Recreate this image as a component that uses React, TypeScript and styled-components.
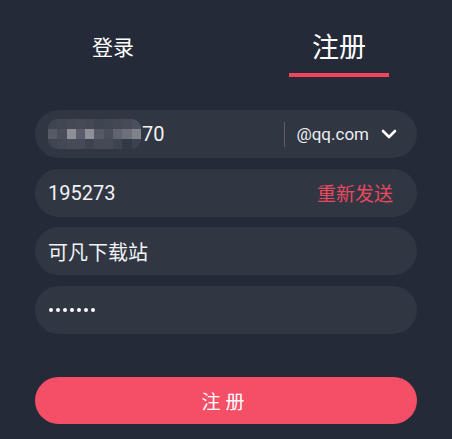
import React from 'react';
import styled, {createGlobalStyle} from "styled-components";

const GlobalStyle = createGlobalStyle`
  html, body {
    margin: 0;
    padding: 0;
    background-color: #252a38;
  }
  body {
    font-family: Roboto, "Noto Sans CJK SC", sans-serif;
    color: #f2f3f5;
  }
`
const Page = styled.div`
  width: 452px;
  height: 439px;
  background-color: #252a38;
  overflow: hidden;
`
const Tabs = styled.nav`
  display: flex;
  padding-top: 28px;
`
const Tab = styled.div<{ $active?: boolean }>`
  flex: 1;
  display: flex;
  flex-direction: column;
  align-items: center;
  cursor: pointer;

  span {
    height: 36px;
    line-height: 36px;
    font-family: "Noto Sans CJK SC", sans-serif;
    font-size: ${p => p.$active ? '27px' : '21px'};
    color: #ffffff;
  }

  &::after {
    content: '';
    width: 100px;
    height: 4px;
    margin-top: 9px;
    background-color: ${p => p.$active ? '#f0455d' : 'transparent'};
  }
`
const Form = styled.form`
  display: flex;
  flex-direction: column;
  gap: 10.5px;
  padding: 33px 35px 0;
`
const Field = styled.div<{ $right?: number }>`
  height: 48px;
  border-radius: 24px;
  background-color: #313643;
  display: flex;
  align-items: center;
  padding: 0 ${p => p.$right ?? 20}px 0 13px;
  font-size: 20px;
  color: #f2f3f5;
`
const Value = styled.span`
  font-family: Roboto, "Noto Sans CJK SC", sans-serif;
  font-size: 20px;
`
const Mosaic = styled.span`
  display: grid;
  grid-template-columns: repeat(10, 9.3px);
  grid-template-rows: repeat(3, 9.7px);
  border-radius: 9px;
  overflow: hidden;
  filter: blur(0.4px);
  margin-right: 1px;
`
const Spacer = styled.span`
  flex: 1;
`
const Divider = styled.span`
  width: 1px;
  height: 25px;
  background-color: #5b606c;
`
const Domain = styled.span`
  margin-left: 11px;
  font-size: 17px;
  color: #eceef1;
`
const Chevron = styled.svg`
  margin-left: 12px;
  width: 16px;
  height: 10px;
`
const Resend = styled.span`
  font-family: "Noto Sans CJK SC", sans-serif;
  font-size: 19px;
  color: #e9485e;
  cursor: pointer;
`
const Dots = styled.span`
  display: flex;
  gap: 3px;
  margin-left: 1px;

  i {
    width: 4px;
    height: 4px;
    border-radius: 50%;
    background-color: #ffffff;
  }
`
const Submit = styled.button`
  display: block;
  margin: 43px 35px 0;
  width: calc(100% - 70px);
  height: 47px;
  border: none;
  border-radius: 24px;
  background-color: #f54f68;
  color: #ffffff;
  font-family: "Noto Sans CJK SC", sans-serif;
  font-size: 19px;
  letter-spacing: 5px;
  padding-left: 5px;
  cursor: pointer;
`

const mosaic: string[] = [
    '#3f4451', '#414653', '#444955', '#454a56', '#434854', '#3f4451', '#414653', '#444855', '#474b57', '#4c505c',
    '#565a66', '#4a4e5a', '#8d9099', '#5a5e6a', '#8e9199', '#555966', '#4a4e5a', '#60646f', '#6e717b', '#80838c',
    '#3f4451', '#434855', '#474b58', '#454a56', '#3e4350', '#444955', '#464a57', '#3f4451', '#343946', '#3d4250',
]

const App: React.FC = () => {
    return (
        <Page>
            <GlobalStyle/>
            <Tabs>
                <Tab><span>登录</span></Tab>
                <Tab $active><span>注册</span></Tab>
            </Tabs>
            <Form onSubmit={e => e.preventDefault()}>
                <Field>
                    <Mosaic>
                        {mosaic.map((c, i) => <i key={i} style={{background: c}}/>)}
                    </Mosaic>
                    <Value>70</Value>
                    <Spacer/>
                    <Divider/>
                    <Domain>@qq.com</Domain>
                    <Chevron viewBox="0 0 16 10">
                        <path d="M2 2l6 6 6-6" fill="none" stroke="#fff" strokeWidth="2.6" strokeLinecap="round" strokeLinejoin="round"/>
                    </Chevron>
                </Field>
                <Field $right={24}>
                    <Value>195273</Value>
                    <Spacer/>
                    <Resend>重新发送</Resend>
                </Field>
                <Field>
                    <Value>可凡下载站</Value>
                </Field>
                <Field>
                    <Dots>
                        {Array.from({length: 7}).map((_, i) => <i key={i}/>)}
                    </Dots>
                </Field>
            </Form>
            <Submit type="submit">注册</Submit>
        </Page>
    );
};
export default App;
